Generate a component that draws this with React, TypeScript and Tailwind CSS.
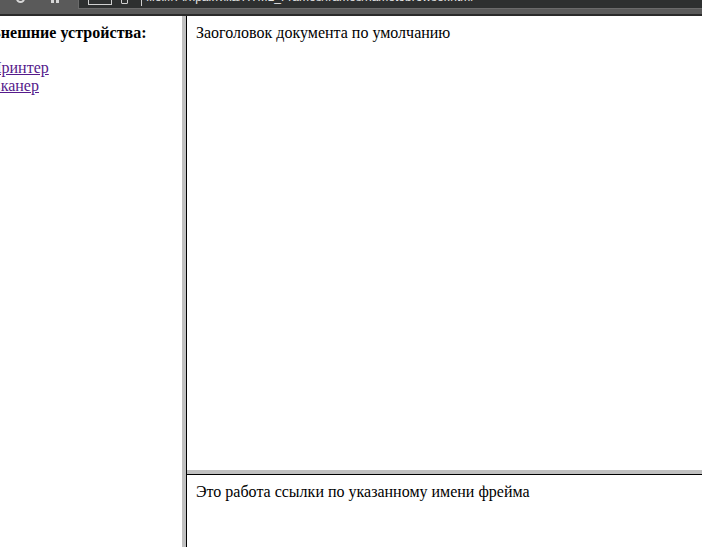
import React from "react";

export default function App() {
  const serif = { fontFamily: '"Liberation Serif", "Times New Roman", serif' };
  return (
    <div className="w-[702px] h-[547px] overflow-hidden bg-white flex flex-col" style={serif}>
      {/* browser toolbar remnant */}
      <div className="h-[16px] flex flex-col bg-[#5a5a5a] shrink-0">
        <div className="h-[14px] flex">
          <div className="w-[78px] relative">
            <div className="absolute left-[16px] top-[-6px] w-[9px] h-[9px] rounded-full border-2 border-[#d8d8d8]" />
            <div className="absolute left-[51px] top-0 w-[3px] h-[3px] bg-[#d8d8d8]" />
            <div className="absolute left-[56px] top-0 w-[3px] h-[3px] bg-[#d8d8d8]" />
          </div>
          <div className="flex-1 h-[9px] bg-[#2e3030] border-l border-b border-[#6b6b6b] relative overflow-hidden">
            <div className="absolute left-[9px] top-[-3px] w-[24px] h-[8px] border border-[#d0d0d0]" />
            <div className="absolute left-[42px] top-[-3px] w-[7px] h-[7px] rounded-[1px] border border-[#d0d0d0]" />
            <div className="absolute left-[62px] top-0 w-px h-[6px] bg-[#d0d0d0]" />
            <div
              className="absolute left-[67px] top-[-9px] text-[12px] leading-[12px] text-[#e8e8e8] whitespace-nowrap"
              style={{ fontFamily: '"Liberation Sans", Arial, sans-serif' }}
            >
              file:///F:/практика/HTML_Frames/frames/nametobrowser.html
            </div>
          </div>
        </div>
        <div className="h-[2px] bg-[#2a2a2a]" />
      </div>

      {/* frameset */}
      <div className="flex-1 flex min-h-0">
        <div className="w-[182px] shrink-0 overflow-hidden pt-[8px] text-[16px] text-black">
          <div className="-ml-[10px] whitespace-nowrap">
            <div className="font-bold leading-[18px] tracking-[0.05px]">Внешние устройства:</div>
            <div className="h-[17px]" />
            <div className="leading-[17.5px]">
              <a className="text-[#551a8b] underline" href="#">Принтер</a>
            </div>
            <div className="leading-[17.5px]">
              <a className="text-[#551a8b] underline" href="#">Сканер</a>
            </div>
          </div>
        </div>
        <div className="w-[4px] shrink-0 bg-[#c0c0c0]" />
        <div className="flex-1 flex flex-col border-l border-black min-w-0">
          <div className="h-[454px] shrink-0 pt-[8px] pl-[9px] text-[16px] text-black leading-[18px]">
            Заоголовок документа по умолчанию
          </div>
          <div className="h-[4px] shrink-0 bg-[#c0c0c0]" />
          <div className="flex-1 border-t border-black pt-[8px] pl-[9px] text-[16px] text-black leading-[18px]">
            Это работа ссылки по указанному имени фрейма
          </div>
        </div>
      </div>
    </div>
  );
}
